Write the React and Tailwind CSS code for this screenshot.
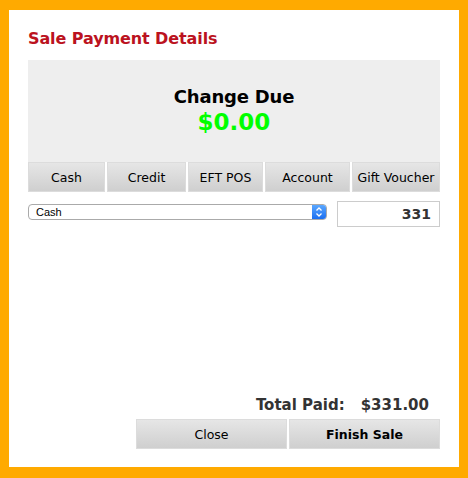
export default function App() {
  const tabs = [
    ["Cash", "w-[77px]"],
    ["Credit", "w-[79px]"],
    ["EFT POS", "w-[75px]"],
    ["Account", "w-[85px]"],
    ["Gift Voucher", "w-[88px]"],
  ];
  const btn = "bg-gradient-to-b from-[#e6e6e6] to-[#cfcfcf] border border-[#dcdcdc] flex items-center justify-center";
  return (
    <div className="w-[468px] h-[478px] bg-[#ffaa00] pt-[10px] pl-[9px] pr-[9px] pb-[11px] font-['DejaVu_Sans',sans-serif]">
      <div className="bg-white w-full h-full px-[19px] pt-[19px] pb-[18px] flex flex-col">
        <div className="text-[#bb1220] font-bold text-[16px] leading-[20px] tracking-[-0.1px]">Sale Payment Details</div>
        <div className="mt-[11px] bg-[#eeeeee] h-[102px] flex flex-col items-center pt-[26px]">
          <div className="text-black font-bold text-[18px] leading-[22px] tracking-[-0.2px]">Change Due</div>
          <div className="mt-[1px] text-[#00ff00] font-bold text-[23px] leading-[27px]">$0.00</div>
        </div>
        <div className="flex gap-[2px] h-[30px]">
          {tabs.map(([t, w]) => (
            <div key={t} className={`${w} ${btn} pt-[3px] text-[12.5px] text-black`}>{t}</div>
          ))}
        </div>
        <div className="mt-[9px] flex items-start">
          <div className="mt-[3px] w-[299px] h-[16px] border border-[#aaaaaa] rounded-[4px] flex items-center justify-between overflow-hidden bg-white">
            <span className="pl-[7px] text-[11px] font-['Liberation_Sans',sans-serif] text-black leading-none">Cash</span>
            <div className="w-[14px] h-full bg-gradient-to-b from-[#5aa7ff] to-[#1a6ef0] flex items-center justify-center">
              <svg width="8" height="12" viewBox="0 0 8 12" fill="none" stroke="white" strokeWidth="1.3">
                <path d="M1.5 4.5 L4 2 L6.5 4.5" />
                <path d="M1.5 7.5 L4 10 L6.5 7.5" />
              </svg>
            </div>
          </div>
          <div className="ml-[10px] w-[103px] h-[26px] border border-[#cccccc] flex items-center justify-end pr-[8px] text-[14px] font-bold text-[#333333]">331</div>
        </div>
        <div className="flex-1" />
        <div className="flex justify-end pr-[11px] gap-[16px] text-[15px] font-bold text-[#333333] leading-[18px]">
          <span>Total Paid:</span>
          <span>$331.00</span>
        </div>
        <div className="mt-[5px] flex justify-end gap-[2px] h-[30px]">
          <div className={`w-[151px] ${btn} pt-[2px] text-[12.5px] text-black`}>Close</div>
          <div className={`w-[151px] ${btn} pt-[2px] text-[12.5px] font-bold text-black`}>Finish Sale</div>
        </div>
      </div>
    </div>
  );
}
